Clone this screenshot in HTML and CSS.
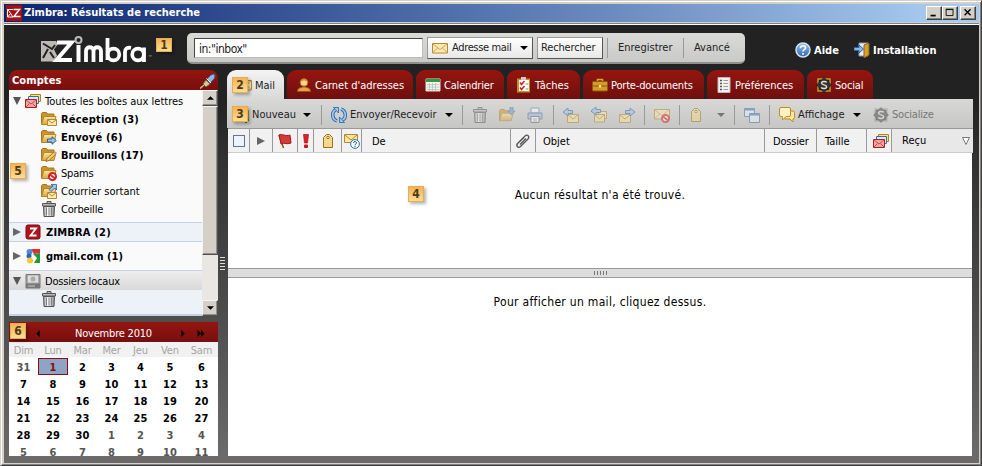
FILE: index.html
```html
<!DOCTYPE html>
<html lang="fr">
<head>
<meta charset="utf-8">
<title>Zimbra: Résultats de recherche</title>
<link rel="stylesheet" href="styles.css">
</head>
<body>
<svg class="defs" width="0" height="0">
  <defs>
    <linearGradient id="gold" x1="0" y1="0" x2="0" y2="1"><stop offset="0" stop-color="#fbe7a0"/><stop offset="1" stop-color="#d9a43a"/></linearGradient>
    <linearGradient id="steel" x1="0" y1="0" x2="1" y2="0"><stop offset="0" stop-color="#999"/><stop offset=".4" stop-color="#fff"/><stop offset="1" stop-color="#888"/></linearGradient>
    <linearGradient id="blue" x1="0" y1="0" x2="0" y2="1"><stop offset="0" stop-color="#9cc3ea"/><stop offset="1" stop-color="#2f66ae"/></linearGradient>
  </defs>
  <symbol id="env" viewBox="0 0 16 16"><path d="M.5 3.500h15v9.500H.5z" fill="#fbe9b4" stroke="#b8862b"/><path d="M1 4l7 5.500L15 4M1 12.500l4.500-4.500M15 12.500L10.500 8" fill="none" stroke="#c99b45" stroke-width=".9"/></symbol>
  <symbol id="minienv" viewBox="0 0 10 7"><path d="M.5.500h9v6h-9z" fill="#fdebb8" stroke="#b8862b"/><path d="M1 1l4 3 4-3" fill="none" stroke="#b8862b"/></symbol>
  <symbol id="folder" viewBox="0 0 16 16"><path d="M.5 13.500V2.500l1-1h4l1 1.500h6.500v2.500" fill="#c9952c" stroke="#a87718"/><path d="M.5 13.500l2.500-8h12l-2 8z" fill="url(#gold)" stroke="#b8862b"/></symbol>
  <symbol id="arrow" viewBox="0 0 10 9"><path d="M.5 3h4.500V.700L9.300 4.500 5 8.300V6H.5z" fill="#9cc3ea" stroke="#2d609e"/></symbol>
  <symbol id="stack" viewBox="0 0 16 16"><path d="M5.500 1.500h10v7h-10z" fill="#fae08e" stroke="#b98016"/><path d="M3.500 3.500h10v7h-10z" fill="#d9e9f8" stroke="#2e6dac"/><path d="M.5 6.500h11v8H.5z" fill="#f2a5a5" stroke="#b51b1b"/><path d="M1 7l5 4 5-4M1 14l3.500-3.500M11 14L7.500 10.500" fill="none" stroke="#c94040" stroke-width=".9"/></symbol>
  <symbol id="trash" viewBox="0 0 16 16"><path d="M2.500 5.500h11l-.5 10H3z" fill="url(#steel)" stroke="#555"/><path d="M1.500 2.500h13v2.500h-13zM6 .5h4v2H6z" fill="#bbb" stroke="#555"/><path d="M5.500 6.500v8M8 6.500v8M10.500 6.500v8" stroke="#777" stroke-width=".9"/></symbol>
  <symbol id="stop" viewBox="0 0 9 9"><circle cx="4.500" cy="4.500" r="3.500" fill="#fff" stroke="#d41f24" stroke-width="2"/><path d="M2 2.500l5 4" stroke="#d41f24" stroke-width="1.800"/></symbol>
  <symbol id="right" viewBox="0 0 8 8"><path d="M0 0l8 4-8 4z" fill="#666"/></symbol>
  <symbol id="down" viewBox="0 0 8 8"><path d="M0 0h8L4 8z" fill="#555"/></symbol>
  <symbol id="caret" viewBox="0 0 8 4"><path d="M0 0h8L4 4z" fill="currentColor"/></symbol>
  <symbol id="tag" viewBox="0 0 12 16"><path d="M1.500 14.500V4.500l3-3h3l3 3v10z" fill="#f3d98a" stroke="#9c7418"/><circle cx="6" cy="4.500" r="1.200" fill="#fff" stroke="#6d5316" stroke-width=".8"/></symbol>
  <symbol id="social" viewBox="0 0 16 16"><path d="M2 2h12v12H2z" fill="#222" stroke="#c59a27" stroke-width="1.500"/><path d="M8 .5L15.500 8 8 15.500.5 8z" fill="#333" stroke="#111" stroke-width=".5"/><path d="M10.800 5.300C9.500 4 5.500 4 5.600 6.300c.1 2 5 1.200 5 3.400 0 2.300-4 2.200-5.500.8" fill="none" stroke="#ddd" stroke-width="1.500"/></symbol>
</svg>

<div class="window">
  <div class="titlebar">
    <svg class="appicon" viewBox="0 0 16 16"><path d="M0 0h16v16H0z" fill="#a30f14"/><path d="M1.500 4v8h5.500L1.500 4M1.500 12l3.500-4M2 4.500h5" fill="none" stroke="#fff"/><path d="M7.500 4.500h6l-5.500 7h6.500" fill="none" stroke="#fff" stroke-width="1.500"/></svg>
    <span class="title">Zimbra: Résultats de recherche</span>
    <div class="winbtns">
      <span class="wb"><svg viewBox="0 0 16 14"><path d="M4 9h6v2H4z"/></svg></span><span class="wb"><svg viewBox="0 0 16 14"><path d="M3.500 3h8v7h-8zM3 2.500h9" fill="none" stroke="#000"/></svg></span><span class="wb close"><svg viewBox="0 0 16 14"><path d="M4 2.500l7 7M11 2.500l-7 7" stroke="#000" stroke-width="1.600"/></svg></span>
    </div>
  </div>

  <div class="app">
    <header class="top">
      <svg class="logo" viewBox="0 0 114 28">
        <path d="M1 5h15l2 3-4 5.500 3 6-4 6H1z" fill="#bcb9b5"/><path d="M3 7.500l9 5.500 3-4M8 13L3 22M10 16l4 6" fill="none" stroke="#222" stroke-width="2"/>
        <g fill="none" stroke="#fff"><path d="M17 6.500h14.500L16.500 24h15.500" stroke-width="4"/><circle cx="38.500" cy="4" r="3" stroke="#bbb" stroke-width="2"/>
        <path d="M38.500 9v17" stroke-width="4"/><path d="M46 26V15c0-5 7.500-5 7.500 0v11M53.500 15c0-5 7.500-5 7.500 0v11" stroke-width="3.800"/><path d="M67.500 2v22" stroke-width="3.800"/><circle cx="73.500" cy="18.500" r="5.800" stroke-width="3.700"/><path d="M85 26V16c0-3 2-5 6-4.200" stroke-width="3.800"/><circle cx="98" cy="18.500" r="5.800" stroke-width="3.700"/><path d="M104 11.500V26" stroke-width="3.800"/></g>
        <text x="108" y="23" font-size="5" fill="#bbb">™</text>
      </svg>
      <div class="search">
        <div class="query">in:"inbox"</div>
        <div class="btn kind"><svg class="i16"><use href="#env"/></svg><span>Adresse mail</span><svg class="caret"><use href="#caret"/></svg></div>
        <div class="btn go"><span>Rechercher</span></div>
        <i class="vsep"></i><span class="lnk save">Enregistrer</span>
        <i class="vsep"></i><span class="lnk adv">Avancé</span>
      </div>
      <div class="help"><svg class="i16" viewBox="0 0 16 16"><circle cx="8" cy="8" r="7" fill="url(#blue)" stroke="#d3e2f3" stroke-width="1.500"/><path d="M5.500 6.200c0-3.500 5.500-3 5 0-.3 1.500-2.500 1.500-2.500 3.300M8 11v1.700" fill="none" stroke="#fff" stroke-width="1.700"/></svg><span>Aide</span></div>
      <div class="setup"><svg class="i16" viewBox="0 0 16 16"><path d="M5 1h9v13H5z" fill="#e8eef5" stroke="#8796a8"/><path d="M10 3l5-2v12l-5 3z" fill="#d9a02e" stroke="#8c6010"/><path d="M0 5.500h5V3l4.500 4L5 11V8.500H0z" fill="#8ab9e8" stroke="#2d609e"/></svg><span>Installation</span></div>
    </header>

    <div class="body">
      <aside class="side">
        <div class="sidehead"><span>Comptes</span><svg class="i16" viewBox="0 0 16 16"><path d="M0 15.500L4 12" stroke="#d4b87a" stroke-width="1.500"/><path d="M3 11l3-4 4 4-4 3z" fill="#d9c79c" stroke="#77603b"/><path d="M7 6l4-4 3-1 1 2-1 3-4 4z" fill="#8fb8e2" stroke="#3e6796"/><path d="M6.500 5.500l4.500 4.500" stroke="#eee"/></svg></div>
        <div class="treebox">
          <div class="tree">
            <div class="row root"><svg class="tw"><use href="#down"/></svg><svg class="i16"><use href="#stack"/></svg><span>Toutes les boîtes aux lettres</span></div>
            <div class="row sub b"><svg class="i16" viewBox="0 0 16 16"><use href="#folder" width="16" height="16"/><use href="#minienv" x="6" y="8" width="10" height="7"/></svg><span class="wide">Réception (3)</span></div>
            <div class="row sub b"><svg class="i16" viewBox="0 0 16 16"><use href="#folder" width="16" height="16"/><use href="#arrow" x="6" y="7" width="10" height="9"/></svg><span class="wide">Envoyé (6)</span></div>
            <div class="row sub b"><svg class="i16" viewBox="0 0 16 16"><use href="#folder" width="16" height="16"/><path d="M5 14.500l1-3 7-6.500 2 2-7 6.500z" fill="#f4ce68" stroke="#8c6010" stroke-width=".8"/><path d="M12.500 5.500l2 2L15.800 6l-2-2z" fill="#e88"/></svg><span>Brouillons (17)</span></div>
            <div class="row sub"><svg class="i16" viewBox="0 0 16 16"><use href="#folder" width="16" height="16"/><use href="#stop" x="7" y="7" width="9" height="9"/></svg><span class="tight">Spams</span></div>
            <div class="row sub"><svg class="i16" viewBox="0 0 16 16"><use href="#folder" width="16" height="16"/><use href="#minienv" x="6" y="9" width="10" height="7"/><path d="M8 6.500l4-3.500-2-1.500h5.500V7L14 5l-4 3.500z" fill="#9cc3ea" stroke="#2d609e" stroke-width=".8"/></svg><span>Courrier sortant</span></div>
            <div class="row sub"><svg class="i16"><use href="#trash"/></svg><span class="tight">Corbeille</span></div>
            <div class="row acct zim b"><svg class="tw"><use href="#right"/></svg><svg class="i16" viewBox="0 0 16 16"><rect x="1" y="1" width="14" height="14" rx="2" fill="#b3141b" stroke="#7c0b10"/><path d="M5 4.500h6l-5.500 7H11.500" fill="none" stroke="#fff" stroke-width="1.800"/></svg><span class="wide">ZIMBRA (2)</span></div>
            <div class="row acct gm b"><svg class="tw"><use href="#right"/></svg><svg class="i16" viewBox="0 0 16 16"><path d="M1 1h14v14H1z" fill="#fff"/><path d="M6 1h9v4L9 6z" fill="#e02f2f"/><path d="M8 6l7-1v10H9l3-5z" fill="#27973c"/><circle cx="4.500" cy="4" r="3" fill="#4f8bdc"/><circle cx="4" cy="8" r="2.500" fill="#2c62bd"/><circle cx="5" cy="12.500" r="3" fill="#f7c72d"/></svg><span>gmail.com (1)</span></div>
            <div class="row acct loc"><svg class="tw"><use href="#down"/></svg><svg class="i16" viewBox="0 0 16 16"><path d="M1 1.500h14V15H1z" fill="#aaa" stroke="#777"/><path d="M3 2.500h10v7H3z" fill="#ddd"/><circle cx="8" cy="6" r="2.500" fill="#aaa"/><path d="M1 10.500h14V15H1z" fill="#777"/><path d="M3 13h7" stroke="#ccc"/></svg><span class="tight">Dossiers locaux</span></div>
            <div class="row sub last"><svg class="i16"><use href="#trash"/></svg><span class="tight">Corbeille</span></div>
            <div class="tail"></div>
          </div>
          <div class="scroll"><span class="sb"><svg class="caret up"><use href="#caret"/></svg></span><span class="thumb"></span><span class="track"></span><span class="sb"><svg class="caret"><use href="#caret"/></svg></span></div>
        </div>
        <div class="cal">
          <div class="calhead"><svg class="prev" viewBox="0 0 4 8"><path d="M4 0v8L0 4z"/></svg><span>Novembre 2010</span><svg class="next" viewBox="0 0 4 8"><path d="M0 0v8l4-4z"/></svg><svg class="ff" viewBox="0 0 8 8"><path d="M0 0v8l4-4v4l4-4-4-4v4z"/></svg></div>
          <div class="grid wk"><span>Dim</span><span>Lun</span><span>Mar</span><span>Mer</span><span>Jeu</span><span>Ven</span><span>Sam</span></div>
          <div class="grid days"><span class="o">31</span><span class="sel">1</span><span>2</span><span>3</span><span>4</span><span>5</span><span>6</span>
          <span>7</span><span>8</span><span>9</span><span>10</span><span>11</span><span>12</span><span>13</span>
          <span>14</span><span>15</span><span>16</span><span>17</span><span>18</span><span>19</span><span>20</span>
          <span>21</span><span>22</span><span>23</span><span>24</span><span>25</span><span>26</span><span>27</span>
          <span>28</span><span>29</span><span>30</span><span class="o">1</span><span class="o">2</span><span class="o">3</span><span class="o">4</span>
          <span class="o">5</span><span class="o">6</span><span class="o">7</span><span class="o">8</span><span class="o">9</span><span class="o">10</span><span class="o">11</span></div>
        </div>
      </aside>
      <div class="sash"><i></i><i></i><i></i><i></i><i></i></div>

      <main class="main">
        <nav class="tabs">
          <div class="tab on"><svg class="i16"><use href="#env"/></svg><span>Mail</span></div>
          <div class="tab"><svg class="i16" viewBox="0 0 16 16"><path d="M1.500 14.500c0-4 3.500-3.500 5-4.500h3c1.500 1 5 .5 5 4.500z" fill="#e9a04c" stroke="#9a5312"/><circle cx="8" cy="5.500" r="3.800" fill="#fbd48e" stroke="#b06a1c"/><path d="M4.300 5C5 .5 11 .5 11.700 5 9 3 7 3 4.300 5z" fill="#d18a35"/></svg><span>Carnet d'adresses</span></div>
          <div class="tab"><svg class="i16" viewBox="0 0 16 16"><path d="M1 2h14v12H1z" fill="#f2f6f2" stroke="#ddd"/><path d="M1 2h14v3H1z" fill="#2f9a3f"/><path d="M2 7.500h12M2 10h12M2 12.500h12M4.500 6v8M7.500 6v8M10.500 6v8" stroke="#b5c2b5" stroke-width=".8"/></svg><span class="tight">Calendrier</span></div>
          <div class="tab"><svg class="i16" viewBox="0 0 16 16"><path d="M1 1.500h13v14H1z" fill="#c98b24"/><path d="M3 3h10v11H3z" fill="#fff"/><path d="M5 0h5v3H5z" fill="#ccc"/><path d="M4 5.500l1.500 2 3-3.500M4 10.500l1.500 2 3-3.500" fill="none" stroke="#cc1d1d" stroke-width="1.500"/><path d="M9.500 7h3M9.500 12h3" stroke="#888"/></svg><span>Tâches</span></div>
          <div class="tab"><svg class="i16" viewBox="0 0 16 16"><path d="M5.500 5V2.500h5V5" fill="none" stroke="#d9a43a" stroke-width="1.500"/><rect x=".5" y="4.500" width="15" height="9.500" rx="1" fill="#d79a27" stroke="#8a5d0c"/><path d="M1 9h14" stroke="#8a5d0c"/><path d="M7 8h2v2.500H7z" fill="#fbe7a0"/></svg><span class="tight">Porte-documents</span></div>
          <div class="tab"><svg class="i16" viewBox="0 0 16 16"><path d="M2 .5h12v15H2z" fill="#f2f2f2" stroke="#bbb"/><path d="M4 3.500h2M4 6.500h2M4 9.500h2M4 12.500h2" stroke="#555" stroke-width="1.500"/><path d="M7.500 3.500H12M7.500 6.500H12M7.500 9.500H12M7.500 12.500H12" stroke="#999"/></svg><span>Préférences</span></div>
          <div class="tab"><svg class="i16"><use href="#social"/></svg><span class="tight">Social</span></div>
        </nav>

        <div class="toolbar">
          <div class="tool c-new"><svg class="i16" viewBox="0 0 16 16"><use href="#env" width="16" height="16"/><path d="M13 10v6M10 13h6" stroke="#299a2b" stroke-width="2"/></svg><span>Nouveau</span></div><svg class="caret"><use href="#caret"/></svg><i class="vsep"></i>
          <div class="tool c-sync"><svg class="i16" viewBox="0 0 16 16"><g fill="none" stroke="#2b609f" stroke-width="3.400"><path d="M6 14C.5 12 .5 5 4.500 3"/><path d="M10 2c5.500 2 5.500 9 1.500 11"/></g><path d="M2.500.500h5v5.500zM13.500 15.500h-5V10z" fill="#9cc7ee" stroke="#2b609f" stroke-width=".8"/><g fill="none" stroke="#9cc7ee" stroke-width="1.800"><path d="M6 14C.5 12 .5 5 4.500 3"/><path d="M10 2c5.500 2 5.500 9 1.500 11"/></g></svg><span>Envoyer/Recevoir</span></div><svg class="caret"><use href="#caret"/></svg><i class="vsep"></i>
          <svg class="i16 dim"><use href="#trash"/></svg>
          <svg class="i16 dim" viewBox="0 0 16 16"><use href="#folder" y="1" width="15" height="15"/><path d="M11 0h3v4h2l-3.500 4L9 4h2z" fill="#6a9dd6" stroke="#2d609e" stroke-width=".7"/></svg>
          <svg class="i16 dim" viewBox="0 0 16 16"><path d="M4 1h8v5H4z" fill="#fff" stroke="#5683b5"/><path d="M1 6h14v6H1z" fill="#9bbbdc" stroke="#4a74a5"/><path d="M4 9.500h8v6H4z" fill="#fff" stroke="#667"/><path d="M6 12h4M6 14h4" stroke="#99a"/></svg><i class="vsep"></i>
          <svg class="i16 dim" viewBox="0 0 16 16"><path d="M4.500 7.500h11v8h-11z" fill="#fbe7a0" stroke="#b8862b"/><path d="M5 8l5 4 5-4" fill="none" stroke="#b8862b"/><path d="M0 5l5-4v2.500h4.500v3H5V9z" fill="#9cc3ea" stroke="#2d609e"/></svg>
          <svg class="i16 dim" viewBox="0 0 16 16"><path d="M7.500 4.500h8v7h-8z" fill="#fbe7a0" stroke="#b8862b"/><path d="M3.500 7.500h10v7.500h-10z" fill="#fbe7a0" stroke="#b8862b"/><path d="M4 8l4.500 4L13 8" fill="none" stroke="#b8862b"/><path d="M0 4l5-4v2.500h4.500v3H5V8z" fill="#9cc3ea" stroke="#2d609e"/></svg>
          <svg class="i16 dim" viewBox="0 0 16 16"><path d="M.5 7.500h11v8H.5z" fill="#fbe7a0" stroke="#b8862b"/><path d="M1 8l5 4 5-4" fill="none" stroke="#b8862b"/><path d="M16 5l-5-4v2.500H6.500v3H11V9z" fill="#9cc3ea" stroke="#2d609e"/></svg><i class="vsep"></i>
          <svg class="i16 dim" viewBox="0 0 16 16"><use href="#env" y="-1" width="16" height="16"/><use href="#stop" x="7" y="7" width="9" height="9"/></svg><i class="vsep"></i>
          <svg class="tagi dim"><use href="#tag"/></svg><svg class="caret dimc"><use href="#caret"/></svg><i class="vsep"></i>
          <svg class="i16 dim" viewBox="0 0 16 16"><path d="M.5 1.500h10v8H.5z" fill="#edf3fa" stroke="#3e72ad"/><path d="M.5 2.500h10" stroke="#3e72ad" stroke-width="2"/><path d="M5.500 6.500h10v9h-10z" fill="#edf3fa" stroke="#3e72ad"/><path d="M5.500 7.500h10" stroke="#3e72ad" stroke-width="2"/></svg><i class="vsep"></i>
          <div class="tool c-view"><svg class="i16" viewBox="0 0 16 16"><path d="M6 4h8q1.500 0 1.500 1.500v5q0 1.500-1.500 1.500v3l-3-3H6z" fill="#ffe69c" stroke="#c58b1c"/><path d="M2 .5h8q1.500 0 1.500 1.500v6q0 1.500-1.500 1.500H7L3.500 13V9.500H2Q.5 9.500.5 8V2Q.5.5 2 .5z" fill="#fff2c5" stroke="#c58b1c"/></svg><span>Affichage</span></div><svg class="caret"><use href="#caret"/></svg>
          <div class="tool c-soc"><svg class="i16 grey"><use href="#social"/></svg><span class="tight">Socialize</span></div>
        </div>

        <div class="cols">
          <div><i class="check"></i></div>
          <div><svg class="tw"><use href="#right"/></svg></div>
          <div><svg class="i16" viewBox="0 0 16 16"><path d="M2 2l4.500 13" stroke="#8b5a1b" stroke-width="1.500"/><path d="M2 2c3-2 6 2 11 0l1 8c-5 2-6-1-10 1z" fill="#d33a3a" stroke="#a01616"/></svg></div>
          <div><svg class="bang" viewBox="0 0 6 16"><path d="M.5 1.500h5L4.500 10h-3z" fill="#dc2222" stroke="#a81212" stroke-width=".7"/><rect x="1" y="11.500" width="4" height="3.500" rx="1" fill="#c41818"/></svg></div>
          <div><svg class="tagi"><use href="#tag"/></svg></div>
          <div><svg class="i16" viewBox="0 0 16 16"><path d="M.5 1.500h13v8H.5z" fill="#fbe7a0" stroke="#b8862b"/><path d="M1 2l6 5 6-5" fill="none" stroke="#b8862b"/><circle cx="11" cy="11" r="4.400" fill="#f6faff" stroke="#2d6fb8"/><path d="M9.500 10c0-2 3.200-1.800 3 0 0 1-1.500 1-1.500 2M11 12.800v1.200" fill="none" stroke="#174f94"/></svg></div>
          <div class="txt">De</div>
          <div><svg class="i16" viewBox="0 0 16 16"><path d="M3 10l7-7c2.500-2 5 .5 3 3l-7.500 7.500c-2 2-5-.5-3-3L9 4.500M5 11.500l6-6" fill="none" stroke="#555" stroke-width="1.300"/></svg></div>
          <div class="txt">Objet</div>
          <div class="txt">Dossier</div>
          <div class="txt">Taille</div>
          <div class="conv"><svg class="i16"><use href="#stack"/></svg></div>
          <div class="txt sorted"><span>Reçu</span><svg class="sort" viewBox="0 0 8 8"><path d="M.5.500h7l-3.500 7z" fill="#fff" stroke="#777"/></svg></div>
        </div>
        <section class="list"><p>Aucun résultat n'a été trouvé.</p></section>
        <div class="hsash"><i></i><i></i><i></i><i></i><i></i></div>
        <section class="view"><p>Pour afficher un mail, cliquez dessus.</p></section>
      </main>
    </div>
  </div>
  <b class="mark k1">1</b><b class="mark k2">2</b><b class="mark k3">3</b><b class="mark k4">4</b><b class="mark k5">5</b><b class="mark k6">6</b>
</div>
</body>
</html>
```
FILE: styles.css
```css
* { box-sizing: border-box; }
body { margin: 0; font: 11px/16px "DejaVu Sans Condensed", "DejaVu Sans", sans-serif; font-stretch: condensed; color: #000; overflow: hidden; }
.defs { position: absolute; }
svg { display: block; flex: none; }
span, p { white-space: nowrap; }
.i16 { width: 16px; height: 16px; }
.tw { width: 8px; height: 8px; }
.caret { width: 8px; height: 4px; color: #000; }
.dimc { color: #777; }
.dim { opacity: .5; }
.grey { filter: grayscale(1); opacity: .45; }
.tagi { width: 12px; height: 16px; }
.tight { letter-spacing: -.18px; }
.wide { letter-spacing: .2px; }

.window { position: relative; width: 982px; height: 466px; background: #d4d0c8; border: 1px solid; border-color: #d4d0c8 #404040 #404040 #d4d0c8; padding: 3px 2px 2px 3px; box-shadow: inset 1px 1px #fff, inset -1px -1px #808080; }
.titlebar { height: 18px; display: flex; align-items: center; background: linear-gradient(90deg, #0a246a 0, #28458a 180px, #4d6da8 430px, #7798c9 680px, #a6caf0 935px); padding: 0 3px 0 2px; }
.appicon { width: 16px; height: 16px; }
.title { margin-left: 2px; color: #fff; font-weight: bold; flex: 1; }
.winbtns { display: flex; }
.wb { width: 16px; height: 14px; background: #d4d0c8; border: 1px solid; border-color: #fff #404040 #404040 #fff; box-shadow: inset -1px -1px #808080; }
.wb svg { width: 14px; height: 12px; }
.close { margin-left: 2px; }

.app { height: 440px; margin-top: 1px; border-top: 1px solid #808080; background: linear-gradient(#222 0, #222 75px, #323232 135px, #4b4b4b 280px, #6a6a6a 430px); box-shadow: inset 0 1px #fff; }
.top { height: 46px; display: flex; align-items: center; padding: 3px 0 0 36px; color: #fff; }
.logo { width: 114px; height: 28px; margin-top: 3px; }
.search { margin-left: 33px; width: 558px; height: 31px; border-radius: 5px; background: linear-gradient(#dadad8, #c9c9c7); border-bottom: 2px solid #8f8f8f; display: flex; align-items: center; padding-left: 7px; color: #222; }
.query { width: 229px; height: 20px; background: #fff; border: 1px solid; border-color: #444 #bbb #bbb #444; padding: 2px 4px; font-size: 12px; letter-spacing: -.5px; }
.btn { height: 22px; display: flex; align-items: center; border: 1px solid; border-color: #999 #555 #555 #999; background: linear-gradient(#fff, #e8e8e8); }
.kind { width: 106px; margin-left: 4px; padding-left: 4px; }
.kind span { width: 68px; margin-left: 4px; letter-spacing: -.35px; }
.go { width: 66px; margin-left: 4px; padding-left: 3px; }
.go span { letter-spacing: -.15px; }
.vsep { width: 1px; height: 20px; background: #999; }
.search .vsep { margin-left: 4px; }
.search .lnk { padding-top: 1px; }
.search .save { margin-left: 10px; width: 61px; }
.search .adv { margin-left: 10px; }
.help, .setup { display: flex; align-items: center; font-weight: bold; gap: 3px; margin-top: 3px; }
.help span, .setup span { padding-top: 2px; }
.help { margin-left: 50px; width: 59px; }
.body { display: flex; height: 386px; padding-left: 5px; }
.side { width: 209px; }
.sidehead { height: 20px; border-radius: 8px 8px 0 0; background: linear-gradient(#96150f, #750f0f); color: #fff; font-weight: bold; letter-spacing: .1px; display: flex; align-items: center; justify-content: space-between; padding: 2px 2px 0 3px; }
.treebox { display: flex; height: 226px; background: #fafafa; }
.tree { width: 193px; padding-top: 2px; }
.row { height: 18px; display: flex; align-items: center; gap: 4px; }
.row > span { padding-top: 2px; }
.root, .acct { padding-left: 4px; }
.sub { padding-left: 32px; }
.b { font-weight: bold; }
.acct .i16 { margin-right: 1px; }
.zim { height: 20px; margin-top: 4px; border: solid #c5d2e6; border-width: 1px 0; background: #edf1f8; }
.zim > span, .gm > span { padding-top: 1px; }
.gm { height: 28px; }
.loc { height: 20px; border-top: 1px solid #c5d2e6; background: linear-gradient(#eee, #d8d8d8); }
.loc .i16 { margin-right: 0; }
.last { background: #edf1f8; }
.tail { height: 8px; background: #edf1f8; border-bottom: 2px solid #c5d2e6; }
.scroll { width: 16px; display: flex; flex-direction: column; background: #e9e7e3; }
.sb, .thumb { background: #d4d0c8; border: 1px solid; border-color: #f5f3f0 #505050 #505050 #f5f3f0; box-shadow: inset -1px -1px #909090; }
.sb { height: 16px; display: flex; align-items: center; justify-content: center; }
.sb .caret { width: 7px; }
.up { transform: scaleY(-1); }
.thumb { height: 149px; }
.track { flex: 1; }
.cal { margin-top: 6px; height: 134px; background: #fff; overflow: hidden; }
.calhead { height: 20px; background: linear-gradient(#96150f, #750f0f); color: #fff; display: flex; align-items: center; padding: 2px 0 0 27px; }
.prev, .next { width: 4px; height: 7px; }
.calhead span { width: 110px; margin-left: 35px; padding-top: 1px; letter-spacing: -.2px; }
.next { margin-left: -4px; }
.ff { width: 8px; height: 7px; margin-left: 12px; }
.grid { display: grid; grid-template-columns: 29px 30px 29px 29px 29px 30px 33px; text-align: center; }
.wk { height: 15px; line-height: 17px; background: #f1f1f1; color: #a5a5a5; letter-spacing: -.15px; }
.days { grid-auto-rows: 17px; line-height: 20px; font-weight: bold; padding-top: 1px; }
.o { color: #555; }
.sel { background: #8ea3c6; border: 1px solid #8a1010; color: #8a1010; line-height: 18px; }
.sash { width: 9px; display: flex; flex-direction: column; align-items: center; gap: 1px; padding-top: 187px; }
.sash i { width: 5px; height: 2px; background: #ddd; border-bottom: 1px solid #444; }

.main { width: 746px; display: flex; flex-direction: column; }
.tabs { height: 29px; display: grid; grid-template-columns: 57px 126px 88px 73px 121px 97px 66px; column-gap: 3px; }
.tab { border-radius: 9px 9px 0 0; background: linear-gradient(#96150f, #6d100e); color: #fff; display: flex; align-items: center; gap: 3px; padding-left: 9px; padding-top: 1px; }
.tab > span { padding-top: 1px; }
.on { background: linear-gradient(#f4f4f4, #d8d8d8); color: #222; }
.toolbar { height: 29px; background: linear-gradient(#d8d8d6, #c6c6c4); display: grid; align-items: center; color: #222;
  grid-template-columns: 71px 18px 10px 114px 17px 10px 27px 28px 26px 10px 28px 28px 25px 10px 25px 11px 27px 17px 10px 25px 10px 74px 20px 70px; padding: 2px 0 0 5px; }
.toolbar .i16 { margin-right: 3px; }
.tool { display: flex; align-items: center; }
.c-new { padding-left: 1px; }
.c-soc span { color: #777; }
.cols { height: 25px; margin: 0 0 0 1px; background: #f1f1f1; border-top: 1px solid #999; border-bottom: 1px solid #ccc; display: grid; grid-template-columns: 22px 23px 25px 16px 28px 20px 149px 25px 229px 52px 50px 25px 1fr; }
.cols > div { border-right: 1px solid #999; display: flex; align-items: center; justify-content: center; }
.cols > div.txt { justify-content: flex-start; padding: 2px 0 0 7px; }
.cols > div:nth-child(10) { padding-left: 8px; letter-spacing: -.2px; }
.cols > div:nth-child(11) { padding-left: 8px; }
.cols > div.conv { padding-left: 3px; }
.cols > div.sorted { background: #e8e8e8; justify-content: space-between; padding: 1px 3px 0 10px; border: 0; }
.cols > div:nth-child(7) { padding-left: 10px; }
.check { width: 12px; height: 12px; background: #eef3fb; border: 1px solid #607590; }
.bang { width: 6px; height: 16px; }
.sort { width: 8px; height: 8px; }
.list, .view { background: #fff; text-align: center; margin: 0 1px; font-size: 12px; letter-spacing: .31px; }
.list { height: 115px; padding-top: 34px; }
.view { flex: 1; padding-top: 16px; }
.list p, .view p { margin: 0; }
.hsash { height: 10px; background: #ddd; border: solid #999; border-width: 1px 0; display: flex; justify-content: center; align-items: center; gap: 2px; margin: 0 1px; }
.hsash i { width: 1px; height: 4px; background: #777; }

.mark { position: absolute; width: 16px; height: 16px; text-align: center; background: linear-gradient(#f2b455, #fbdc93); color: #513a18; border: 1px solid #e7ad55; line-height: 14px; box-shadow: 2px 2px 3px rgba(0,0,0,.3); font-size: 12px; }
.k1 { left: 155px; top: 37px; height: 14px; line-height: 12px; }
.k2 { left: 231px; top: 76px; }
.k3 { left: 231px; top: 105px; }
.k4 { left: 407px; top: 185px; }
.k5 { left: 9px; top: 162px; }
.k6 { left: 9px; top: 322px; }
```
